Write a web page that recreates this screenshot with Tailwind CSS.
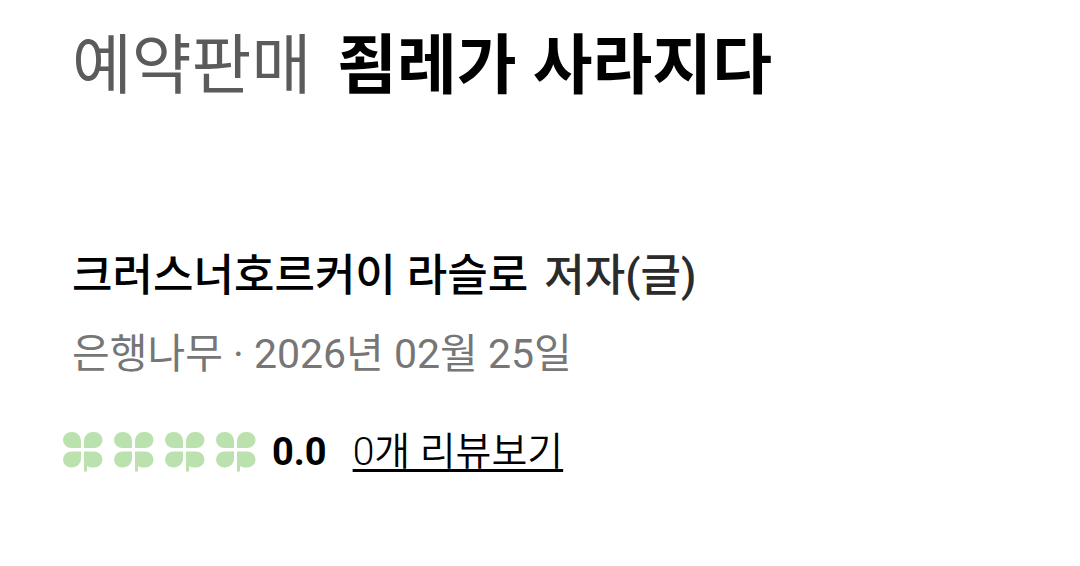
<!DOCTYPE html>
<html lang="ko"><head><meta charset="utf-8"><meta name="viewport" content="width=device-width, initial-scale=1"><title>죔레가 사라지다</title>
<script src="https://cdn.jsdelivr.net/npm/@tailwindcss/browser@4"></script></head>
<body class="bg-white text-black font-[Roboto,'Noto_Sans_CJK_KR',sans-serif]">
<main class="px-18 pt-[22px]">
<h1 class="flex flex-wrap items-center gap-x-[26px] text-[65px] leading-22 font-bold"><span class="font-normal text-[#5b5b5b]">예약판매</span><span>죔레가 사라지다</span></h1>
<p class="mt-33 flex flex-wrap gap-x-4 text-[44px] leading-17 font-medium"><span>크러스너호르커이 라슬로</span><span class="text-[#2b2b2b]">저자(글)</span></p>
<p class="mt-3 text-[41px] leading-16 text-[#767676]">은행나무 · 2026년 02월 25일</p>
<div class="mt-10 -ml-[9px] flex items-center">
<svg class="h-10 w-[193px] shrink-0" viewBox="0 0 193 40" fill="#bbe2ae" role="img" aria-label="평점 0.0">
<defs><g id="clover">
<path d="M9 0A9 8.500 0 0 1 18 8.500V16H8.500A8.500 8 0 0 1 8.500 0Z"/>
<path d="M30 0A9 8.500 0 0 0 21 8.500V16H31A8.500 8 0 0 0 31 0Z"/>
<path d="M9 35.500A9 8.500 0 0 0 18 27V19.500H8.500A8.500 8 0 0 0 8.500 35.500Z"/>
<path d="M21 19.500H31A8.500 8 0 0 1 31 35.500C28 35.500 25.500 35 24 34V39.500H21Z"/>
</g></defs>
<use href="#clover"/><use href="#clover" x="51"/><use href="#clover" x="102"/><use href="#clover" x="153"/></svg>
<strong class="ml-4 text-[38px] leading-13">0.0</strong>
<a href="#reviews" class="ml-[26px] text-[39px] leading-13 font-[350] underline decoration-3 underline-offset-4">0개 리뷰보기</a>
</div></main></body></html>
